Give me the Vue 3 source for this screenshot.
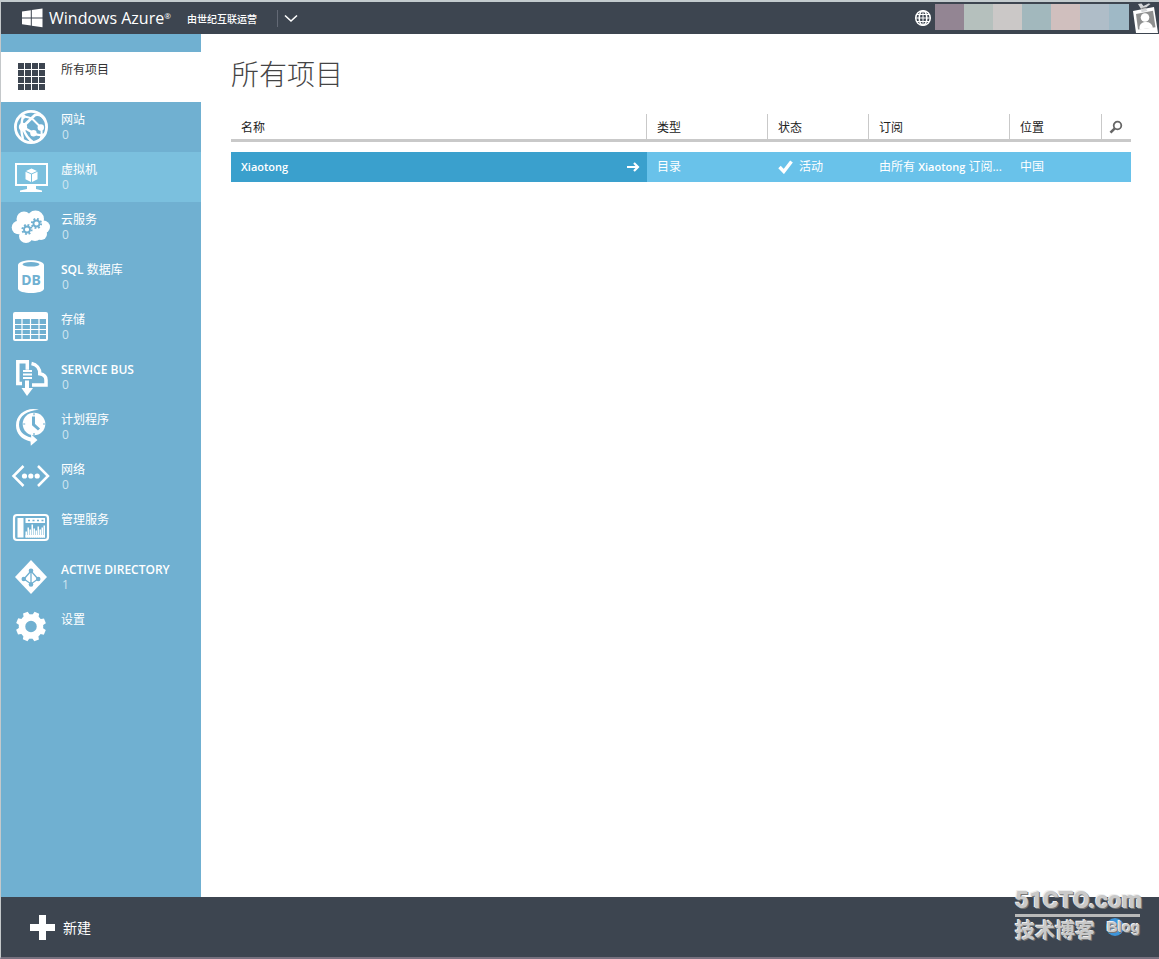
<script setup>
import { ref } from 'vue'

const items = [
  { id: 'all', label: '所有项目' },
  { id: 'web', label: '网站', count: 0 },
  { id: 'vm', label: '虚拟机', count: 0 },
  { id: 'cloud', label: '云服务', count: 0 },
  { id: 'db', latin: 'SQL', label: '数据库', count: 0 },
  { id: 'storage', label: '存储', count: 0 },
  { id: 'bus', latin: 'SERVICE BUS', count: 0 },
  { id: 'scheduler', label: '计划程序', count: 0 },
  { id: 'network', label: '网络', count: 0 },
  { id: 'manage', label: '管理服务' },
  { id: 'ad', latin: 'ACTIVE DIRECTORY', count: 1 },
  { id: 'settings', label: '设置' }
]
const active = ref('all')
const highlighted = 'vm'

const gridCells = Array.from({ length: 16 }, (_, i) => ({ x: 7 + (i % 4) * 7, y: 6 + Math.floor(i / 4) * 7 }))
const bars = [6, 10, 8, 13, 9, 7, 11, 8, 10, 12]
const tones = ['plum', 'sage', 'sand', 'teal', 'rose', 'mist', 'sky']
</script>

<template>
  <div class="page">
    <header class="topbar">
      <a class="brand" href="#">
        <svg width="22" height="20" viewBox="0 0 22 20" fill="#fff" aria-hidden="true">
          <path d="M1 3.600 9.800 2.200v7.200H1zM10.800 2 21.500.500v8.900H10.800zM1 10.400h8.800v7.200L1 16.300zM10.800 10.400h10.700v8.900L10.800 17.800z" />
        </svg>
        <span class="name">Windows Azure<sup>®</sup></span>
      </a>
      <span class="operator">由世纪互联运营</span>
      <button class="expand" aria-label="展开">
        <svg width="14" height="9" viewBox="0 0 14 9" fill="none" stroke="#fff" stroke-width="1.600"><path d="m1 1.500 6 5.500 6-5.500" /></svg>
      </button>
      <button class="globe" aria-label="语言">
        <svg width="18" height="18" viewBox="0 0 18 18" fill="none" stroke="#fff" stroke-width="1.500">
          <circle cx="9" cy="9" r="7.300" /><ellipse cx="9" cy="9" rx="3.800" ry="7.300" /><path d="M9 1.500v15M2.500 5.500h13M1.500 9h15M2.500 12.500h13" stroke-width="1" />
        </svg>
      </button>
      <div class="account"><span v-for="t in tones" :key="t" :class="t"></span></div>
      <button class="badge" aria-label="账户">
        <svg width="26" height="32" viewBox="0 0 26 32" aria-hidden="true">
          <path d="m0 9 7.500-1.400L21 5l4 26H3z" fill="#fff" />
          <path d="m3 12 17-3.200 2.500 16.500L5 27.500z" fill="#8f9090" />
          <path d="m5 2 3.500-.5 2 2.500 5-2.500 2 .5-5 4 2 3-6 1.200-.5-3.200z" fill="#d4d6d8" />
          <path d="m8.500 6.500 4.500-1" stroke="#777" fill="none" />
          <circle cx="12" cy="15.500" r="4.300" fill="#fff" />
          <path d="M6.500 27.500c-.5-4.500 1.500-7 5.500-7.500 4-.5 7 1.500 8 5.800z" fill="#fff" />
        </svg>
      </button>
    </header>

    <div class="body">
      <nav class="side">
        <a v-for="it in items" :key="it.id" href="#" class="item" :class="{ active: active === it.id, highlighted: highlighted === it.id }" @click.prevent="active = it.id">
          <svg class="icon" width="40" height="40" viewBox="0 0 40 40" aria-hidden="true">
            <g v-if="it.id === 'all'" fill="#3d4550">
              <rect v-for="(c, i) in gridCells" :key="i" :x="c.x" :y="c.y" width="6" height="6" />
            </g>
            <g v-else-if="it.id === 'web'" fill="none" stroke="#fff">
              <circle cx="20" cy="20" r="15.600" stroke-width="2.800" />
              <path d="M12.500 8c-2.500 7-3 15-.5 24" stroke-width="2.400" />
              <path d="M12 19.500 24 8c4-1 7 0 9.500 4" stroke-width="2.800" />
              <path d="M13 9.500c4 .5 7 1.500 9 3l8 8c1 4 1 8-1 13" stroke-width="2" />
              <path d="m12 20 11 6.500c4 2 7 2 10 1M12 21c2 6 5 11 10 14" stroke-width="2.400" />
              <g fill="#fff" stroke="none"><circle cx="12" cy="20" r="4.200" /><circle cx="29.800" cy="20.500" r="3.200" /><circle cx="22.500" cy="26.300" r="3.200" /><circle cx="12.500" cy="9.500" r="2.200" /></g>
            </g>
            <g v-else-if="it.id === 'vm'" fill="#fff">
              <path fill-rule="evenodd" d="M4 6h33v23H4zM6 8v19h29V8z" />
              <path d="M16 29h9v3l6 1.500V35H9v-1.500L16 32z" />
              <path d="m20.500 11.500 5.500 2.400-5.500 2.500-5.500-2.500zM14.500 14.800l5.500 2.500V25l-5.500-2.800zM26.500 14.800 21 17.300V25l5.500-2.800z" />
            </g>
            <g v-else-if="it.id === 'cloud'">
              <g fill="#fff">
                <circle cx="13" cy="12" r="7.500" /><circle cx="24.500" cy="12" r="8.500" /><circle cx="7.500" cy="20.500" r="6.800" /><circle cx="32.500" cy="20" r="6.500" />
                <circle cx="15" cy="29" r="7" /><circle cx="24" cy="27" r="7" /><circle cx="30" cy="27" r="6" /><rect x="9" y="13" width="22" height="15" />
              </g>
              <g fill="none" stroke="#70b0d1">
                <circle cx="16" cy="22.500" r="3" stroke-width="1.800" /><circle cx="16" cy="22.500" r="4.600" stroke-width="2" stroke-dasharray="1.800 1.812" />
                <circle cx="25.500" cy="16.500" r="3" stroke-width="1.800" /><circle cx="25.500" cy="16.500" r="4.600" stroke-width="2" stroke-dasharray="1.800 1.812" />
              </g>
            </g>
            <g v-else-if="it.id === 'db'">
              <path d="M7 8c0-6.500 26-6.500 26 0v23.500c0 6-26 6-26 0z" fill="#fff" />
              <ellipse cx="20" cy="7.300" rx="8.500" ry="2.300" fill="#70b0d1" />
              <text x="20" y="27.500" text-anchor="middle" class="dbtext">DB</text>
            </g>
            <g v-else-if="it.id === 'storage'" fill="none" stroke="#fff">
              <rect x="3" y="6" width="33" height="27" rx="1" stroke-width="2" /><path d="M3 9h33" stroke-width="6" />
              <path d="M11 12v21M19.500 12v21M28 12v21M3 17.500h33M3 22.500h33M3 27.500h33" stroke-width="1.200" />
            </g>
            <g v-else-if="it.id === 'bus'">
              <g fill="none" stroke="#fff" stroke-width="3.500">
                <path d="M11 26.500H6.800V4.800h9.500v8" />
                <path d="M20.500 6.500c5 1 8.500 5 8.300 10.300 4 .7 6.200 3 6.200 6.200v5H21" />
              </g>
              <path d="M12 14h9M12 17.500h9M12 21h9" stroke="#fff" stroke-width="2" />
              <path d="M14 23.500h4V31h4l-6 8-5.500-8H14z" fill="#fff" />
            </g>
            <g v-else-if="it.id === 'scheduler'">
              <path d="M28 2.800C16-.5 5 7 5 18.500c0 8 5.500 14 14.500 16l.3 4.200L26.500 33l-6.500-5.800.2 3.300C12 28.500 8 24 8 17.500 8 9 16 3.500 28 2.800z" fill="#fff" />
              <circle cx="23" cy="17" r="11.300" fill="#fff" />
              <path d="M22.500 9.500v8l5.500 5" fill="none" stroke="#70b0d1" stroke-width="3" />
              <path d="M23 6.200v2M23 26v2M12.200 17h2M32 17h2" stroke="#70b0d1" stroke-width="1.200" />
            </g>
            <g v-else-if="it.id === 'network'">
              <path d="M12.500 9 2.500 19l10 10M27 9l10 10-10 10" fill="none" stroke="#fff" stroke-width="2.500" />
              <g fill="#fff"><circle cx="13.500" cy="19" r="2.600" /><circle cx="19.800" cy="19" r="2.600" /><circle cx="26.200" cy="19" r="2.600" /></g>
            </g>
            <g v-else-if="it.id === 'manage'">
              <rect x="3" y="8" width="34" height="25" rx="3" fill="none" stroke="#fff" stroke-width="2.200" />
              <path d="M6.500 11h6v19.500h-6zM14.500 11H34v5H14.500z" fill="#fff" />
              <path d="M17 13.500h2M21.500 13.500h2M26 13.500h2M30.500 13.500h2" stroke="#70b0d1" stroke-width="1.600" />
              <rect v-for="(b, i) in bars" :key="i" :x="14.5 + i * 2" :y="30.5 - b" width="1.500" :height="b" fill="#fff" />
              <path d="M14.500 28H34v2.500H14.500z" fill="#fff" />
            </g>
            <g v-else-if="it.id === 'ad'">
              <path d="m20 3 16 17-16 17L4 20z" fill="#fff" />
              <g fill="none" stroke="#70b0d1" stroke-width="1.300"><path d="M20 14v13M20 14l-7 8 7 5 7-5z" /></g>
              <g fill="#70b0d1"><circle cx="20" cy="13.800" r="2.300" /><circle cx="12.800" cy="22" r="2.300" /><circle cx="27.200" cy="22" r="2.300" /><circle cx="20" cy="27.500" r="2.300" /></g>
            </g>
            <g v-else>
              <circle cx="20" cy="19.500" r="9" fill="none" stroke="#fff" stroke-width="6.500" />
              <path v-for="n in 8" :key="n" d="M16.500 9 17.500 4.500h5l1 4.500z" fill="#fff" :transform="`rotate(${n * 45 - 22} 20 19.5)`" />
            </g>
          </svg>
          <span class="text">
            <span class="label"><b v-if="it.latin">{{ it.latin }}</b>{{ it.latin && it.label ? ' ' : '' }}{{ it.label }}</span>
            <span v-if="it.count !== undefined" class="count">{{ it.count }}</span>
          </span>
        </a>
      </nav>

      <main class="main">
        <h1>所有项目</h1>
        <table class="list">
          <colgroup><col /><col class="c-type" /><col class="c-state" /><col class="c-sub" /><col class="c-loc" /><col class="c-find" /></colgroup>
          <thead>
            <tr>
              <th>名称</th><th>类型</th><th>状态</th><th>订阅</th><th>位置</th>
              <th class="find">
                <button aria-label="搜索">
                  <svg width="14" height="14" viewBox="0 0 14 14" fill="none" stroke="#666"><circle cx="8.500" cy="5.500" r="3.800" stroke-width="1.800" /><path d="M5.800 8.300 1.500 12.700" stroke-width="2.600" /></svg>
                </button>
              </th>
            </tr>
          </thead>
          <tbody>
            <tr>
              <td class="first">
                <a href="#"><b>Xiaotong</b>
                  <svg width="13" height="10" viewBox="0 0 13 10" fill="none" stroke="#fff" stroke-width="2.200"><path d="M0 5h11M7 1l4 4-4 4" /></svg>
                </a>
              </td>
              <td>目录</td>
              <td><span class="state"><svg width="15" height="14" viewBox="0 0 15 14" fill="none" stroke="#fff" stroke-width="3.400"><path d="m1.500 7 4.300 4.500L13.500 1.500" /></svg>活动</span></td>
              <td>由所有 <b>Xiaotong</b> 订阅...</td>
              <td>中国</td>
              <td></td>
            </tr>
          </tbody>
        </table>
      </main>
    </div>

    <footer class="foot">
      <button class="new">
        <svg width="25" height="25" viewBox="0 0 25 25" fill="#fff" aria-hidden="true"><path d="M9 0h7v9h9v7h-9v9H9v-9H0V9h9z" /></svg>
        <span>新建</span>
      </button>
      <div class="mark">
        <div class="site">51CTO.com</div>
        <div class="sub"><span>技术博客</span><span class="blog">Blog</span></div>
      </div>
    </footer>
  </div>
</template>

<style>
body { margin: 0; background: #fff; }
</style>

<style scoped>
.page {
  box-sizing: border-box;
  min-height: 100vh;
  display: flex;
  flex-direction: column;
  border-top: 2px solid #c3cbce;
  border-left: 1px solid #c4c8ca;
  border-bottom: 2px solid #77717f;
  font-family: "Open Sans", "Noto Sans CJK SC", sans-serif;
  font-size: 12px;
  color: #333;
}
button { padding: 0; border: 0; background: none; font: inherit; color: inherit; cursor: pointer; }
a { color: inherit; text-decoration: none; }
svg { display: block; flex: none; }
b { font-weight: 600; }

.topbar { display: flex; align-items: center; height: 32px; background: #3d4550; color: #fff; }
.brand { display: flex; align-items: center; gap: 6px; padding-left: 20px; width: 166px; box-sizing: border-box; }
.name { font-size: 16px; line-height: 24px; white-space: nowrap; }
.name sup { font-size: 8px; line-height: 0; vertical-align: 5px; }
.operator { margin-left: 20px; padding-top: 2px; font-size: 10px; line-height: 16px; font-weight: 500; white-space: nowrap; }
.expand { display: flex; align-items: center; height: 17px; margin-left: 20px; padding-left: 6px; border-left: 1px solid #636975; }
.globe { margin-left: auto; }
.account { display: flex; margin: 0 0 2px 3px; height: 26px; }
.account span { width: 29px; }
.account .plum { background: #938593; }
.account .sage { background: #b5c0bd; }
.account .sand { background: #cbc8c7; }
.account .teal { background: #a2b8bd; }
.account .rose { background: #d0bfbe; }
.account .mist { background: #afbdc8; }
.account .sky { width: 20px; background: #9fb9c6; }
.badge { margin-left: 4px; }

.body { flex: 1; display: flex; }
.side { width: 200px; flex: none; padding-top: 18px; box-sizing: border-box; background: #70b0d1; color: #fff; }
.item { display: flex; gap: 10px; height: 50px; padding: 0 10px; box-sizing: border-box; }
.item .icon { margin-top: 5px; }
.item.highlighted { background: #7bc0de; }
.item.active { background: #fff; color: #333; }
.text { display: flex; flex-direction: column; padding-top: 10px; }
.label { line-height: 16px; white-space: nowrap; }
.count { padding-left: 1px; line-height: 14px; color: #cfe5f0; }
.dbtext { font: 700 14px "Noto Sans", sans-serif; fill: #70b0d1; }

.main { flex: 1; min-width: 0; padding: 20px 28px 0 30px; }
h1 { margin: 0; font-size: 28px; line-height: 40px; font-weight: 300; color: #444; }
.list { width: 100%; margin-top: 20px; table-layout: fixed; border-collapse: separate; border-spacing: 0; }
.c-type { width: 121px; }
.c-state { width: 101px; }
.c-sub { width: 141px; }
.c-loc { width: 92px; }
.c-find { width: 29px; }
th, td { box-sizing: border-box; padding: 0 0 0 10px; text-align: left; font-weight: 400; line-height: 16px; white-space: nowrap; }
th { height: 28px; padding-top: 2px; border-right: 1px solid #c9c9c9; border-bottom: 3px solid #c9c9c9; color: #222; }
th.find { padding: 4px 0 0 7px; border-right: 0; }
tbody::before { content: ""; display: block; height: 10px; }
td { height: 30px; background: #69c2ea; color: #fff; }
td b { font-size: 11px; }
td.first { background: #3aa0cd; }
.first a { display: flex; align-items: center; justify-content: space-between; padding-right: 7px; }
.state { display: flex; align-items: center; gap: 6px; }

.foot { position: relative; display: flex; align-items: center; height: 60px; background: #3d4550; color: #fff; }
.new { display: flex; align-items: center; gap: 8px; margin-left: 29px; font-size: 14px; line-height: 20px; }
.new span { padding-top: 2px; }
.mark { position: absolute; right: 19px; bottom: 12px; width: 125px; color: #c9c9c9; text-shadow: 1px 1px 0 #777, -1px -1px 0 #eee; }
.site { font: 900 24px/28px Roboto, "Liberation Sans", sans-serif; border-bottom: 3px solid #b9b9b9; white-space: nowrap; }
.sub { display: flex; justify-content: space-between; font-size: 20px; line-height: 28px; font-weight: 700; }
.blog { position: relative; font: 700 15px/20px "Liberation Sans", sans-serif; z-index: 0; }
.blog::before { content: ""; position: absolute; left: -1px; top: 1px; width: 18px; height: 18px; border-radius: 50%; background: #3d95da; z-index: -1; }
</style>
